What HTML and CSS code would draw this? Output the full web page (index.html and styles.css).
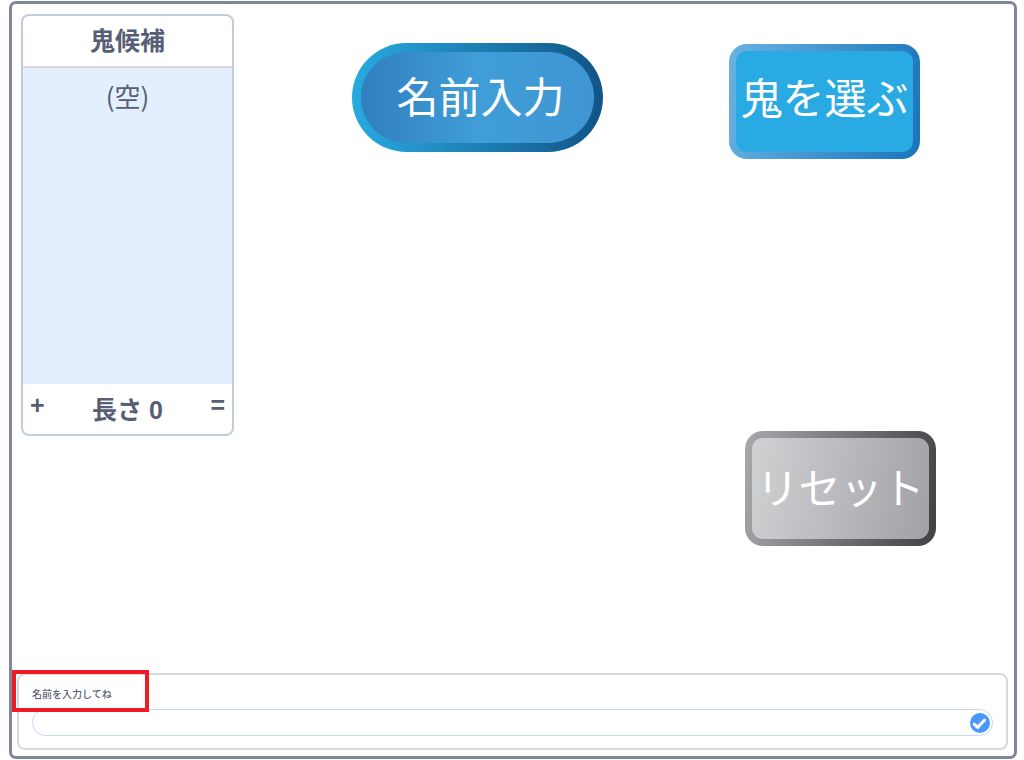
FILE: index.html
```html
<!DOCTYPE html>
<html lang="ja">
<head>
<meta charset="utf-8">
<meta name="viewport" content="width=device-width, initial-scale=1">
<title>鬼を選ぶ</title>
<link rel="stylesheet" href="styles.css">
</head>
<body>
<main class="stage">
  <div class="scene">
    <section class="list">
      <h2 class="list-header">鬼候補</h2>
      <div class="list-body">(空)</div>
      <div class="list-footer">
        <button class="list-icon" type="button">+</button>
        <span class="list-length">長さ 0</span>
        <button class="list-icon" type="button">=</button>
      </div>
    </section>
    <button class="sprite sprite-name" type="button">名前入力</button>
    <div class="sprite-column">
      <button class="sprite sprite-pick" type="button">鬼を選ぶ</button>
      <button class="sprite sprite-reset" type="button">リセット</button>
    </div>
  </div>
  <form class="ask">
    <label class="ask-label" for="answer">名前を入力してね</label>
    <div class="ask-field">
      <input class="ask-input" id="answer" type="text" autocomplete="off">
      <button class="ask-submit" type="button" aria-label="OK">
        <svg viewBox="0 0 20 20" width="20" height="20" aria-hidden="true">
          <circle cx="10" cy="10" r="10" fill="#4c97ff"/>
          <path d="M4.2 11.2l3.4 3.2 6.8-7.2" fill="none" stroke="#fff" stroke-width="3" stroke-linecap="round" stroke-linejoin="round"/>
        </svg>
      </button>
    </div>
    <div class="highlight"></div>
  </form>
</main>
</body>
</html>
```
FILE: styles.css
```css
* {
  box-sizing: border-box;
}

body {
  margin: 0;
  padding: 1px 7px 1px 9px;
  background: #fff;
  color: #575e75;
  font-family: "Noto Sans CJK JP", sans-serif;
}

button {
  margin: 0;
  padding: 0;
  border: 0;
  background: none;
  color: inherit;
  font: inherit;
  cursor: pointer;
}

.stage {
  display: flex;
  flex-direction: column;
  min-height: calc(100vh - 2px);
  border: 3px solid #7f869b;
  border-radius: 7px;
}

.scene {
  display: flex;
  flex: 1;
  align-items: flex-start;
  padding: 10px 78px 0 9px;
}

.list {
  width: 213px;
  border: 2px solid #c1ccdd;
  border-radius: 8px;
  overflow: hidden;
  font-size: 25px;
  line-height: 36px;
  text-align: center;
}

.list-header {
  margin: 0;
  padding: 5px 0 9px;
  border-bottom: 2px solid #d9d9d9;
  font-size: 25px;
  font-weight: 700;
}

.list-body {
  height: 316px;
  padding-top: 10px;
  background: #e3efff;
  font-size: 26px;
}

.list-footer {
  display: flex;
  align-items: flex-start;
  justify-content: space-between;
  padding: 3px 7px 6px;
  font-family: "Liberation Sans", "Noto Sans CJK JP", sans-serif;
  font-weight: 700;
}

.list-icon {
  line-height: 36px;
}

.list-length {
  padding-top: 5px;
}

.sprite {
  display: flex;
  align-items: center;
  justify-content: center;
  flex: none;
  color: #fff;
  font-size: 42px;
  font-weight: 400;
  line-height: 60px;
  white-space: nowrap;
}

.sprite-name {
  width: 251px;
  height: 109px;
  margin: 29px auto 0 118px;
  padding: 0 0 6px 6px;
  border: 9px solid transparent;
  border-radius: 55px;
  background:
    linear-gradient(90deg, #317fbe, #3f9dd8 50%, #4096d2) padding-box,
    linear-gradient(90deg, #27aae1, #125486) border-box;
}

.sprite-column {
  display: flex;
  flex-direction: column;
  gap: 272px;
  width: 207px;
  padding-top: 30px;
}

.sprite-pick,
.sprite-reset {
  width: 191px;
  height: 115px;
  border: 7px solid transparent;
  border-radius: 18px;
}

.sprite-pick {
  padding-bottom: 12px;
  background:
    linear-gradient(#29aae2, #29aae2) padding-box,
    linear-gradient(100deg, #69b2e2, #1b75bb) border-box;
}

.sprite-reset {
  align-self: flex-end;
  padding-bottom: 6px;
  background:
    linear-gradient(100deg, #d0d1d3, #a0a2a6) padding-box,
    linear-gradient(100deg, #a7a9ac, #414042) border-box;
}

.ask {
  position: relative;
  margin: 0 6px 6px 5px;
  padding: 11px 13px 12px;
  border: 2px solid #d9d9d9;
  border-radius: 8px;
}

.ask-label {
  display: block;
  margin-bottom: 7px;
  font-size: 10px;
  font-weight: 500;
  line-height: 16px;
}

.ask-field {
  display: grid;
  align-items: center;
}

.ask-input,
.ask-submit {
  grid-area: 1 / 1;
}

.ask-input {
  width: 100%;
  height: 27px;
  padding: 0 32px 0 12px;
  border: 1px solid #c8d7ee;
  border-radius: 14px;
  background: #fff;
  color: inherit;
  font: inherit;
  font-size: 12px;
}

.ask-submit {
  justify-self: end;
  width: 20px;
  height: 20px;
  margin-right: 3px;
}

.ask-submit svg {
  display: block;
}

.highlight {
  position: absolute;
  top: -5px;
  left: -7px;
  width: 137px;
  height: 42px;
  border: 4px solid #ed1c24;
  pointer-events: none;
}
```
